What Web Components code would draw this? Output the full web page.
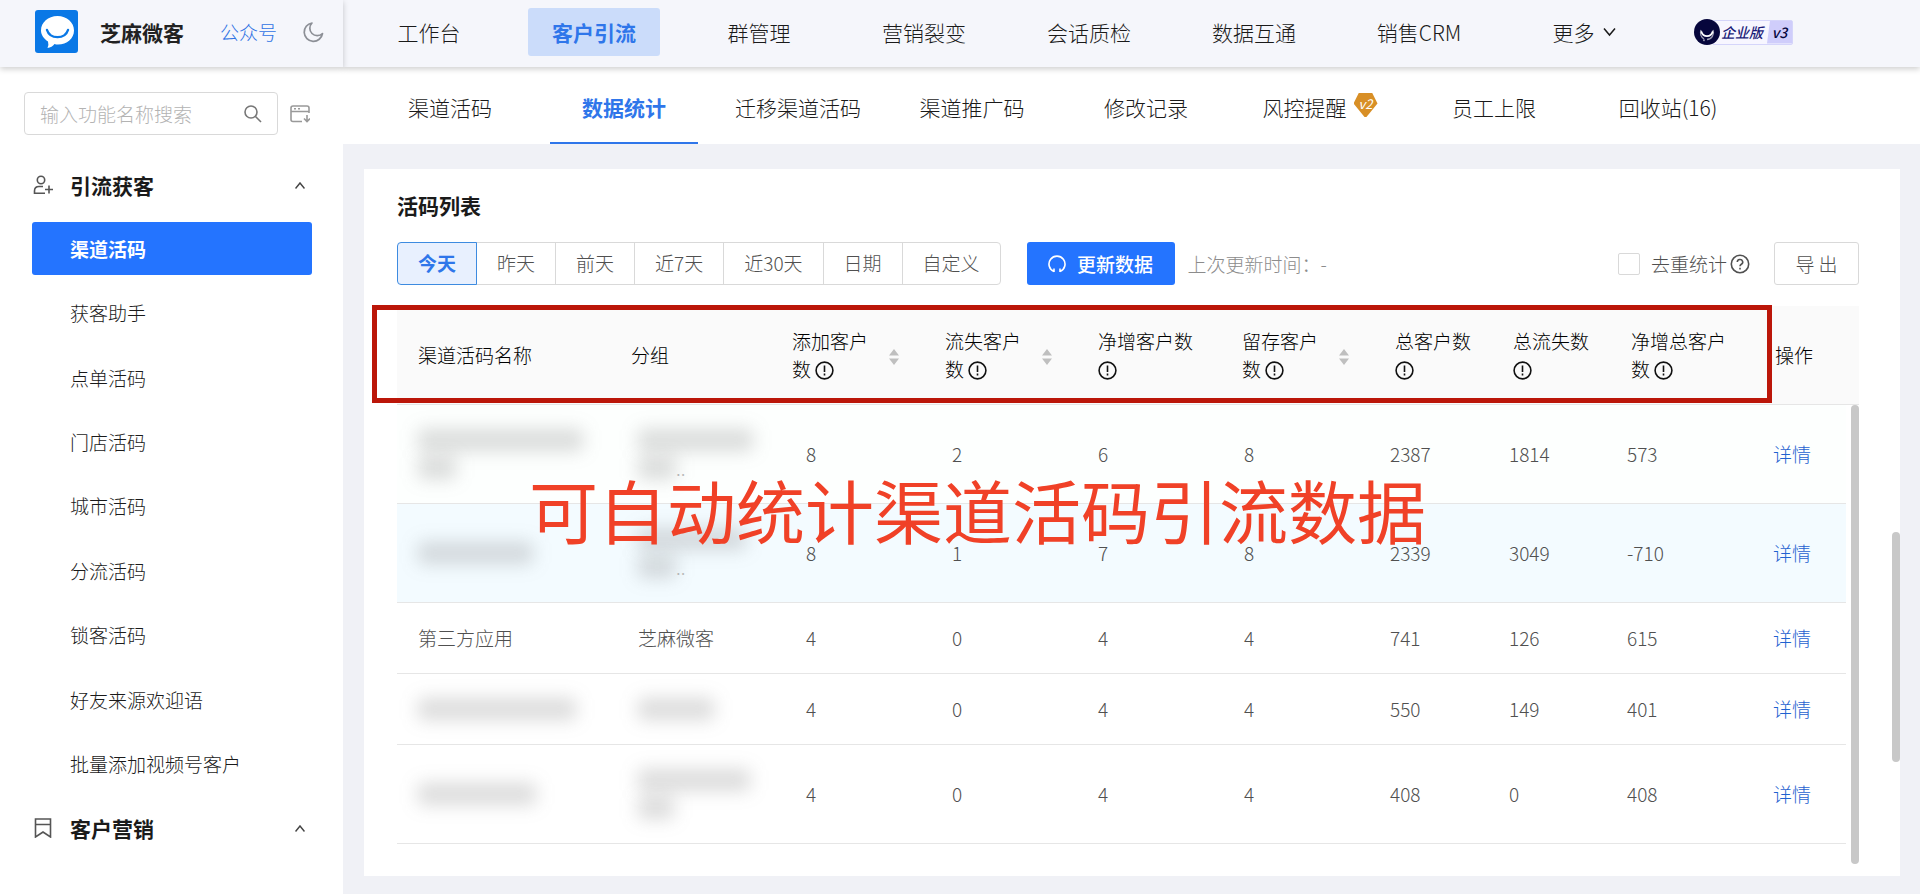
<!DOCTYPE html>
<html lang="zh-CN">
<head>
<meta charset="utf-8">
<title>芝麻微客 - 数据统计</title>
<style>
html,body{margin:0;padding:0}
body{font-family:"Noto Sans CJK SC","Noto Sans",sans-serif;font-weight:300;font-size:19px;line-height:28px;color:#1a1a1a;background:#f0f1f6}
</style>
</head>
<body>
<app-shell>
  <brand-bar slot="brand"></brand-bar>
  <main-nav slot="nav">
    <nav-item>工作台</nav-item>
    <nav-item active>客户引流</nav-item>
    <nav-item>群管理</nav-item>
    <nav-item>营销裂变</nav-item>
    <nav-item>会话质检</nav-item>
    <nav-item>数据互通</nav-item>
    <nav-item>销售CRM</nav-item>
    <nav-item more>更多</nav-item>
    <edition-badge></edition-badge>
  </main-nav>
  <side-menu slot="side"></side-menu>
  <tab-bar slot="tabs">
    <tab-item>渠道活码</tab-item>
    <tab-item active>数据统计</tab-item>
    <tab-item>迁移渠道活码</tab-item>
    <tab-item>渠道推广码</tab-item>
    <tab-item>修改记录</tab-item>
    <tab-item>风控提醒<version-gem></version-gem></tab-item>
    <tab-item>员工上限</tab-item>
    <tab-item>回收站(16)</tab-item>
  </tab-bar>
  <list-card>
    <filter-bar slot="filters"></filter-bar>
    <stats-table></stats-table>
  </list-card>
</app-shell>

<script>
function component(name, html, init) {
  const tpl = document.createElement('template');
  tpl.innerHTML = '<style>*,:host{box-sizing:border-box}button,input{font:inherit;color:inherit}button{cursor:pointer}a{color:inherit;text-decoration:none}svg{display:block;flex:none}</style>' + html;
  customElements.define(name, class extends HTMLElement {
    constructor() {
      super();
      this.attachShadow({ mode: 'open' }).append(tpl.content.cloneNode(true));
      if (init) init(this.shadowRoot, this);
    }
  });
}

component('app-shell', `
<style>
:host{display:grid;grid-template-columns:343px minmax(0,1fr);grid-template-rows:67px minmax(0,1fr);min-height:100vh}
.brand,.nav{background:#f5f6fb;position:relative}
.brand{z-index:3;box-shadow:0 2px 6px rgba(0,0,0,.2);clip-path:inset(0 -6px -12px 0)}
.nav{z-index:2;box-shadow:0 2px 6px rgba(0,0,0,.2)}
.side{background:#fff}
.main{display:flex;flex-direction:column;min-width:0}
.content{flex:1;display:flex;padding:25px 20px 18px 21px}
::slotted(list-card){flex:1;min-width:0}
</style>
<header class="brand"><slot name="brand"></slot></header>
<div class="nav"><slot name="nav"></slot></div>
<aside class="side"><slot name="side"></slot></aside>
<main class="main"><slot name="tabs"></slot><div class="content"><slot></slot></div></main>`);

component('brand-bar', `
<style>
:host{display:flex;align-items:center;height:63px;padding-left:35px}
h1{margin:0 36px 0 22px;font-size:21px;font-weight:700;color:#222}
a{color:#2f73e4;margin-right:25px}
button{padding:0;border:0;background:none;color:#8c8f96}
</style>
<svg width="43" height="43" viewBox="0 0 43 43"><rect width="43" height="43" rx="3" fill="#0a78e6"/><path d="M22.500 6C32 6 39 12.500 39 20.500S32 34.500 23 34.500q-2 0-3.500-.5Q17 37.500 12.500 38q1.500-3 .5-6.500C9 29 6 25 6 20.500 6 12.500 13 6 22.500 6z" fill="#fff"/><path d="M12 20c3 9.500 18 9.500 21 0" fill="none" stroke="#0a78e6" stroke-width="2.400" stroke-linecap="round"/></svg>
<h1>芝麻微客</h1><a href="#">公众号</a>
<button aria-label="深色模式"><svg width="22" height="22" viewBox="0 0 22 22" fill="none" stroke="currentColor" stroke-width="1.700" stroke-linejoin="round"><path d="M10 2a9.200 9.200 0 1 0 10.500 10.500A5.500 5.500 0 1 1 10 2z"/></svg></button>`);

component('main-nav', `
<style>:host{display:block}nav{display:flex;align-items:center;gap:33px;height:64px;padding-left:20px}</style>
<nav aria-label="主导航"><slot></slot></nav>`);

component('nav-item', `
<style>
:host{display:block;width:132px;font-size:21px}
a{display:flex;align-items:center;justify-content:center;gap:8px;height:48px;border-radius:3px}
:host([active]) a{background:#cbdcfa;color:#2f76ea;font-weight:700}
svg{display:none}
:host([more]) svg{display:block}
</style>
<a href="#"><slot></slot><svg width="13" height="10" viewBox="0 0 13 10" fill="none" stroke="currentColor" stroke-width="1.500"><path d="M1 1.500l5.500 6.500L12 1.500"/></svg></a>`);

component('edition-badge', `
<style>
:host{display:flex;align-items:center;margin-left:11px;color:#1c1c78;font-size:14px;line-height:22px;font-weight:500;font-style:italic}
.plate{display:flex;height:25px;margin-left:-8px;border:1px solid #d5d5fa;border-radius:2px;background:#f7f6ff}
.name{padding:0 4px 0 8px}
.ver{width:25px;text-align:center;background:#cfcdfb;color:#06063c;clip-path:polygon(3px 0,100% 0,100% 100%,0 100%)}
svg{z-index:1}
</style>
<svg width="26" height="26" viewBox="0 0 26 26"><circle cx="13" cy="13" r="13" fill="#06063c"/><path d="M10.500 20.500L9.500 22M10 20a7.500 7.500 0 0 1-3-9M19 11a7 7 0 0 1-6 9.500" fill="none" stroke="#fff" stroke-width="1.400" opacity=".6"/><path d="M7.500 13c1.500 5.500 9.500 5.500 11 0" fill="none" stroke="#fff" stroke-width="1.800" stroke-linecap="round"/></svg>
<span class="plate"><span class="name">企业版</span><span class="ver">v3</span></span>`);

component('side-menu', `
<style>
:host{display:block;padding-top:25px}
form{display:flex;align-items:center;gap:12px;padding:0 33px 0 24px}
.box{flex:1;display:flex;align-items:center;height:43px;padding:0 15px;border:1px solid #d9d9d9;border-radius:4px;color:#777}
input{flex:1;min-width:0;padding:0;border:0;outline:0;background:none}
input::placeholder{color:#b3b3b3;opacity:1}
button{display:block;width:22px;padding:0;border:0;background:none;color:#999}
h2{display:flex;align-items:center;height:64px;margin:0;padding:0 38px 0 33px;font-size:21px;font-weight:700}
h2 span{flex:1;padding-left:17px}
form+h2{margin-top:19px;height:62px}
ul{display:grid;grid-auto-rows:1fr;align-items:center;height:580px;margin:0;padding:0 31px 0 32px;list-style:none}
li a{display:block;padding:0 38px;line-height:53px;border-radius:3px}
li a.on{background:#2474ff;color:#fff;font-weight:700}
.box{margin-right:0}
</style>
<form role="search"><div class="box"><input type="text" placeholder="输入功能名称搜索" aria-label="输入功能名称搜索"><svg width="18" height="18" viewBox="0 0 18 18" fill="none" stroke="currentColor" stroke-width="1.600"><circle cx="7" cy="7" r="6"/><path d="M11.500 11.500L17 17"/></svg></div>
<button type="button" aria-label="收起菜单"><svg width="20" height="18" viewBox="0 0 20 18" fill="none" stroke="currentColor" stroke-width="1.600"><path d="M12 16.500H3a2 2 0 0 1-2-2V3a2 2 0 0 1 2-2h14a2 2 0 0 1 2 2v5M1 6.500h18M4 3.700h2M8 3.700h2M17 10v6.500M14 13.500l3 3 3-3"/></svg></button></form>
<h2><svg width="20" height="20" viewBox="0 0 20 20" fill="none" stroke="#555" stroke-width="1.600"><circle cx="8" cy="5" r="3.700"/><path d="M12 18.200H1.500V16q0-4.500 4.500-4.500h4M16 10.500v8M12 14.500h8"/></svg><span>引流获客</span><svg width="10" height="7" viewBox="0 0 10 7" fill="none" stroke="#444" stroke-width="1.500"><path d="M.5 6.500L5 1l4.500 5.500"/></svg></h2>
<ul>
<li><a class="on" href="#">渠道活码</a></li><li><a href="#">获客助手</a></li><li><a href="#">点单活码</a></li><li><a href="#">门店活码</a></li><li><a href="#">城市活码</a></li><li><a href="#">分流活码</a></li><li><a href="#">锁客活码</a></li><li><a href="#">好友来源欢迎语</a></li><li><a href="#">批量添加视频号客户</a></li>
</ul>
<h2><svg width="20" height="20" viewBox="0 0 20 20" fill="none" stroke="#555" stroke-width="1.600"><path d="M2.500 1h15v18L10 14l-7.500 5zM2.500 6.500h15"/></svg><span>客户营销</span><svg width="10" height="7" viewBox="0 0 10 7" fill="none" stroke="#444" stroke-width="1.500"><path d="M.5 6.500L5 1l4.500 5.500"/></svg></h2>`);

component('tab-bar', `
<style>:host{display:block;background:#fff}nav{display:flex;height:77px;padding-left:20px}</style>
<nav aria-label="渠道活码功能"><slot></slot></nav>`);

component('tab-item', `
<style>
:host{display:block;width:174px;padding:0 13px;font-size:21px}
a{display:flex;align-items:center;justify-content:center;height:77px;padding-top:5px;white-space:nowrap;border-bottom:2px solid transparent}
:host([active]) a{color:#2f76ea;font-weight:700;border-color:#2f76ea}
</style>
<a href="#"><slot></slot></a>`);

component('version-gem', `
<style>
:host{display:flex;margin:0 0 4px 7px;width:24px;height:24px;justify-content:center;background:#d88f26;clip-path:polygon(22% 0,78% 0,100% 44%,54% 100%,46% 100%,0 44%);color:#fff;font-size:13px;line-height:21px;font-weight:400;font-style:italic}
</style>v2`);

component('list-card', `
<style>
:host{display:flex;flex-direction:column;position:relative;background:#fff;padding:20px 41px 12px 33px}
h3{margin:0;font-size:21px;line-height:32px;font-weight:700}
.thumb{position:absolute;right:0;top:363px;width:8px;height:230px;border-radius:4px;background:#c8c8c8}
</style>
<h3>活码列表</h3><slot name="filters"></slot><slot></slot><div class="thumb"></div>`);

component('filter-bar', `
<style>
:host{display:flex;align-items:center;margin:21px 0;color:#505050;white-space:nowrap}
fieldset{display:flex;margin:0 26px 0 0;padding:0;border:0}
label.seg{position:relative;height:43px;line-height:40px;padding:0 20px;border:1px solid #d9d9d9;margin-left:-1px}
label.seg:first-of-type{margin:0;border-radius:4px 0 0 4px}
label.seg:last-of-type{border-radius:0 4px 4px 0}
.seg input{position:absolute;inset:0;margin:0;opacity:0}
.seg:has(:checked){z-index:1;border-color:#3d8be0;background:#e8f0fe;color:#2f76ea;font-weight:700}
button{height:43px;border-radius:3px;padding:0}
.update{display:flex;align-items:center;justify-content:center;gap:11px;width:148px;border:0;background:#2474ff;color:#fff;font-weight:500}
.time{margin-left:13px;color:#8c8c8c}
.dedupe{display:flex;align-items:center;margin-left:auto}
.dedupe input{appearance:none;width:22px;height:22px;margin:0 11px 0 0;border:1px solid #d9d9d9;border-radius:2px;background:#fff}
.dedupe svg{margin-left:3px}
.export{width:85px;margin-left:24px;border:1px solid #d9d9d9;background:#fff}
</style>
<fieldset aria-label="统计时间">
<label class="seg"><input type="radio" name="range" checked>今天</label><label class="seg"><input type="radio" name="range">昨天</label><label class="seg"><input type="radio" name="range">前天</label><label class="seg"><input type="radio" name="range">近7天</label><label class="seg"><input type="radio" name="range">近30天</label><label class="seg"><input type="radio" name="range">日期</label><label class="seg"><input type="radio" name="range">自定义</label>
</fieldset>
<button class="update"><svg width="18" height="18" viewBox="0 0 18 18" fill="none" stroke="currentColor" stroke-width="1.600"><path d="M6 16.500a8 8 0 1 1 6 0M6 17v-3.500M12 17v-3.500"/></svg>更新数据</button>
<span class="time">上次更新时间：-</span>
<label class="dedupe"><input type="checkbox">去重统计<svg width="20" height="20" viewBox="0 0 20 20" fill="none" stroke="currentColor" stroke-width="1.600"><circle cx="10" cy="10" r="8.700"/><path d="M7.300 8a2.700 2.500 0 1 1 4 2.200Q10 11 10 12.300M10 13.700v1.700"/></svg></label>
<button class="export">导 出</button>`);

component('info-icon', `
<style>:host{display:inline-block;vertical-align:-3px}</style>
<svg width="19" height="19" viewBox="0 0 19 19" fill="none" stroke="#111" stroke-width="1.600"><circle cx="9.500" cy="9.500" r="8.400"/><path d="M9.500 4.500v6.500M9.500 12.500v2"/></svg>`);

component('sort-arrows', `
<style>:host{display:block;flex:none;margin:3px 4px 0 0}</style>
<svg width="10" height="16" viewBox="0 0 10 16" fill="#bfbfbf"><path d="M5 0l5 6.500H0zM5 16l5-6.500H0z"/></svg>`);

component('masked-text', `
<style>
:host{display:block;min-height:28px}
div{display:flex;align-items:center;height:28px;line-height:28px;color:#bbb}
i{display:block;height:22px;border-radius:4px;background:rgba(90,90,90,.22);filter:blur(9px)}
</style>`, (root, el) => {
  for (const w of el.getAttribute('lines').split(',')) {
    const row = document.createElement('div');
    const bar = document.createElement('i');
    bar.style.width = parseInt(w) + 'px';
    row.append(bar);
    if (w.endsWith('.')) row.append('..');
    root.append(row);
  }
});

component('stats-table', `
<style>
:host{display:flex;flex-direction:column;flex:1;position:relative}
table{width:100%;table-layout:fixed;border-collapse:separate;border-spacing:0}
th,td{padding:21px;text-align:left;font-weight:300;border-bottom:1px solid #e6e6e6}
th{height:99px;background:#fafafa;color:#000}
th:last-child,td:last-child{padding-right:0}
th div{display:flex;align-items:center}
th div span{flex:1;margin-right:5px}
td{color:#505050}
td a{color:#1f62d0}
tbody tr:nth-child(1) td{background:#fdfffe}
tbody tr:nth-child(2) td{background:#f3fbff}
.scroll{display:flex;flex:1;gap:5px;min-height:459px}
.rows{flex:1;min-width:0}
.thumb{width:8px;border-radius:4px;background:#c8c8c8}
.frame{position:absolute;left:-25px;right:87px;top:-1px;height:98px;border:5px solid #bb1609;pointer-events:none}
.caption{position:absolute;left:132px;top:159px;margin:0;font-size:69px;line-height:88px;font-weight:400;color:#f04127;white-space:nowrap;pointer-events:none}
</style>
<table aria-label="活码列表表头">
<colgroup><col style="width:213px"><col style="width:161px"><col style="width:153px"><col style="width:153px"><col style="width:144px"><col style="width:153px"><col style="width:118px"><col style="width:118px"><col style="width:144px"><col style="width:105px"></colgroup>
<thead><tr><th>渠道活码名称</th><th>分组</th>
<th><div><span>添加客户数 <info-icon></info-icon></span><sort-arrows></sort-arrows></div></th>
<th><div><span>流失客户数 <info-icon></info-icon></span><sort-arrows></sort-arrows></div></th>
<th>净增客户数 <info-icon></info-icon></th>
<th><div><span>留存客户数 <info-icon></info-icon></span><sort-arrows></sort-arrows></div></th>
<th>总客户数 <info-icon></info-icon></th><th>总流失数 <info-icon></info-icon></th><th>净增总客户数 <info-icon></info-icon></th><th>操作</th></tr></thead>
</table>
<div class="scroll"><div class="rows"><table aria-label="活码列表">
<colgroup><col style="width:220px"><col style="width:168px"><col style="width:146px"><col style="width:146px"><col style="width:146px"><col style="width:146px"><col style="width:119px"><col style="width:118px"><col style="width:146px"><col style="width:94px"></colgroup>
<tbody></tbody></table></div><div class="thumb"></div></div>
<div class="frame"></div>
<p class="caption">可自动统计渠道活码引流数据</p>`, root => {
  const mask = lines => `<masked-text lines="${lines}"></masked-text>`;
  const rows = [
    [mask('165,38'), mask('115,38.'), 8, 2, 6, 8, 2387, 1814, 573],
    [mask('115'), mask('108,38.'), 8, 1, 7, 8, 2339, 3049, -710],
    ['第三方应用', '芝麻微客', 4, 0, 4, 4, 741, 126, 615],
    [mask('158'), mask('76'), 4, 0, 4, 4, 550, 149, 401],
    [mask('118'), mask('112,36'), 4, 0, 4, 4, 408, 0, 408]
  ];
  root.querySelector('tbody').innerHTML = rows.map(r =>
    '<tr>' + r.map(c => `<td>${c}</td>`).join('') + '<td><a href="#">详情</a></td></tr>').join('');
});
</script>
</body>
</html>
